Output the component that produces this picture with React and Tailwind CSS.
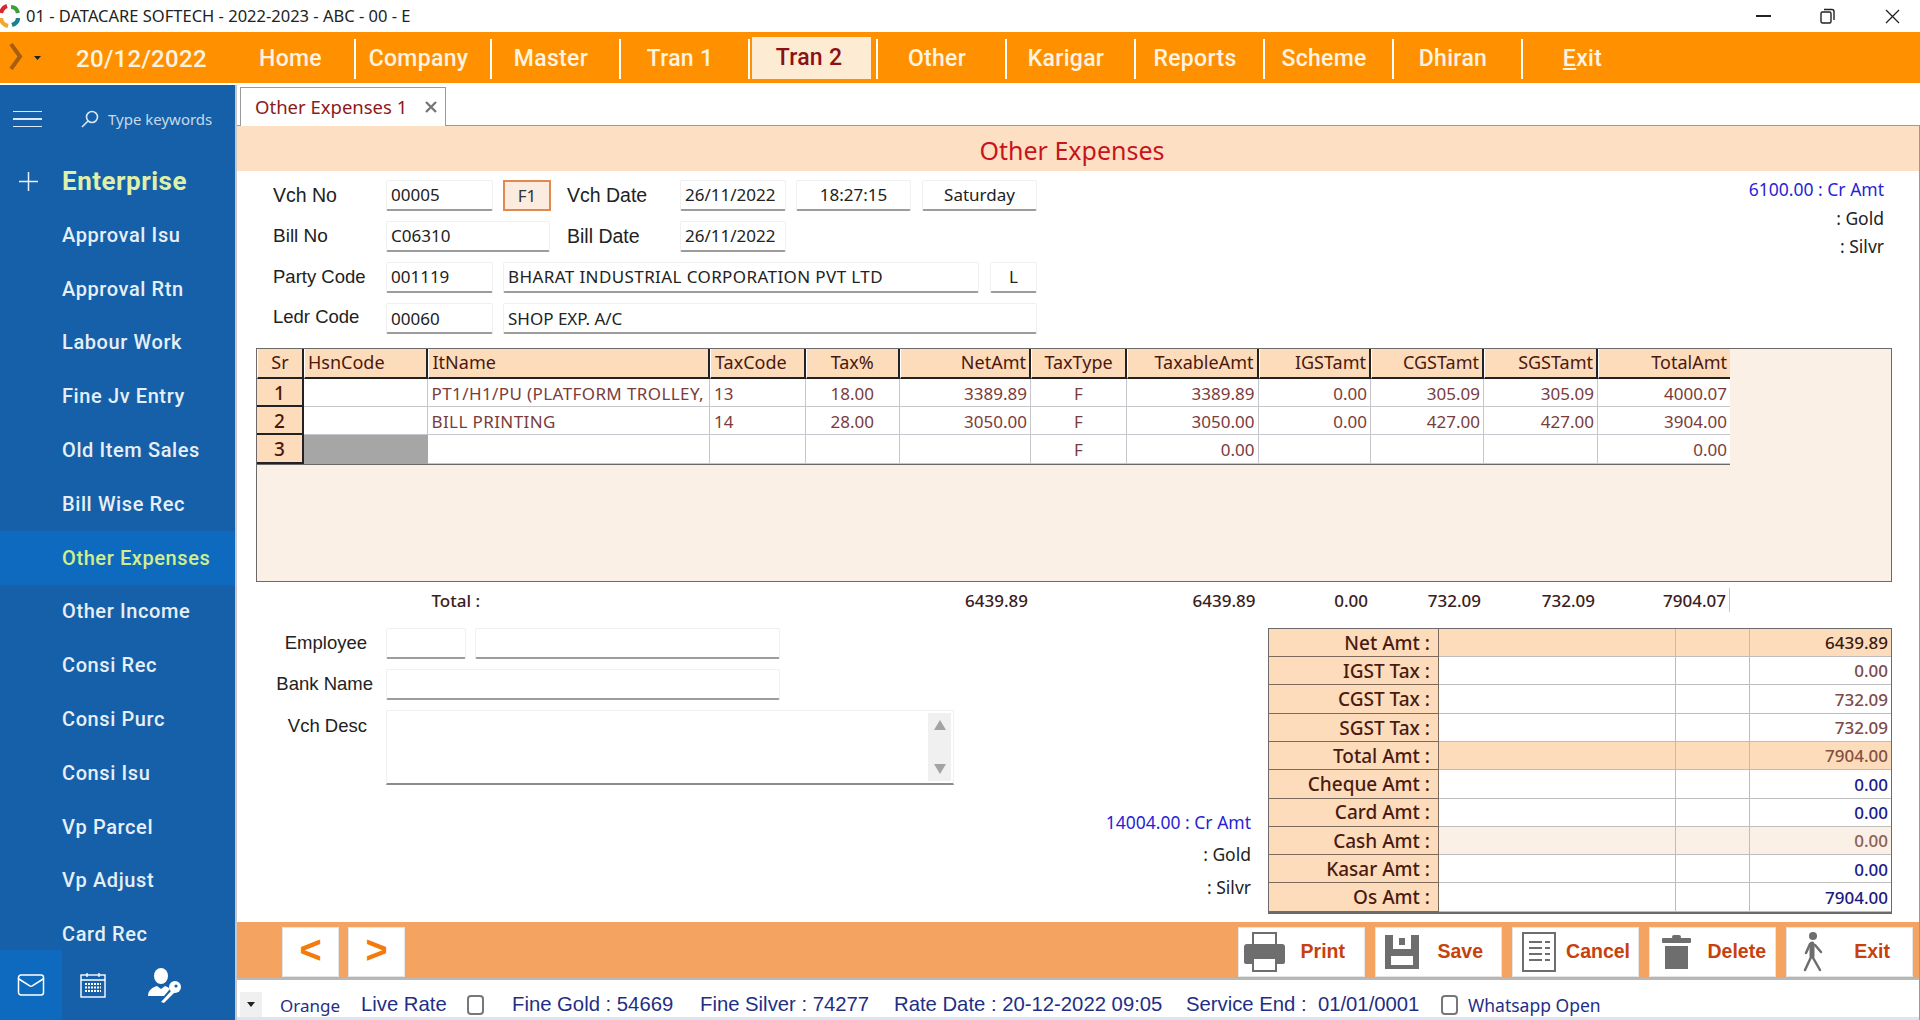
import { Mail } from "lucide-react";

const menuItems = ["Company", "Master", "Tran 1", "Tran 2", "Other", "Karigar", "Reports", "Scheme", "Dhiran"];

const sideItems = [
  "Approval Isu", "Approval Rtn", "Labour Work", "Fine Jv Entry", "Old Item Sales", "Bill Wise Rec", "Other Expenses",
  "Other Income", "Consi Rec", "Consi Purc", "Consi Isu", "Vp Parcel", "Vp Adjust", "Card Rec",
];

// grid columns, widths read off the picture
const cols = [
  "w-[47px] justify-center",
  "w-[123.5px] justify-start pl-[3px]",
  "w-[282.5px] justify-start pl-1",
  "w-[95.5px] justify-start pl-1",
  "w-[94.5px] justify-center",
  "w-[131px] justify-end pr-[3px]",
  "w-[96px] justify-center",
  "w-[131.5px] justify-end pr-[3px]",
  "w-[112.5px] justify-end pr-[3px]",
  "w-[113px] justify-end pr-[3px]",
  "w-[114px] justify-end pr-[3px]",
  "w-[132px] justify-end pr-[3px]",
];

const head = ["Sr", "HsnCode", "ItName", "TaxCode", "Tax%", "NetAmt", "TaxType", "TaxableAmt", "IGSTamt", "CGSTamt", "SGSTamt", "TotalAmt"];

const rows = [
  ["1", "", "PT1/H1/PU (PLATFORM TROLLEY,", "13", "18.00", "3389.89", "F", "3389.89", "0.00", "305.09", "305.09", "4000.07"],
  ["2", "", "BILL PRINTING", "14", "28.00", "3050.00", "F", "3050.00", "0.00", "427.00", "427.00", "3904.00"],
  ["3", "", "", "", "", "", "F", "0.00", "", "", "", "0.00"],
];

const totals = ["", "", "Total :", "", "", "6439.89", "", "6439.89", "0.00", "732.09", "732.09", "7904.07"];

const summary = [
  { label: "Net Amt :", value: "6439.89", bg: "bg-[#fddcbc]", color: "text-[#3a1a10]" },
  { label: "IGST Tax :", value: "0.00", bg: "bg-white", color: "text-[#7d4a4a]" },
  { label: "CGST Tax :", value: "732.09", bg: "bg-white", color: "text-[#7d4a4a]" },
  { label: "SGST Tax :", value: "732.09", bg: "bg-white", color: "text-[#7d4a4a]" },
  { label: "Total Amt :", value: "7904.00", bg: "bg-[#fddcbc]", color: "text-[#85503f]" },
  { label: "Cheque Amt :", value: "0.00", bg: "bg-white", color: "text-[#1a1a8c]" },
  { label: "Card Amt :", value: "0.00", bg: "bg-white", color: "text-[#1a1a8c]" },
  { label: "Cash Amt :", value: "0.00", bg: "bg-[#faf0e6]", color: "text-[#8a6055]" },
  { label: "Kasar Amt :", value: "0.00", bg: "bg-white", color: "text-[#1a1a8c]" },
  { label: "Os Amt :", value: "7904.00", bg: "bg-white", color: "text-[#1a1a80]" },
];

const noto = "font-['Noto_Sans',sans-serif]";
const din = "font-['Roboto',sans-serif]";
const arial = "font-['Liberation_Sans',sans-serif]";

function Field({ className, children }) {
  return (
    <div className={`h-[31px] flex items-center px-1 bg-white border border-[#f0f0f0] border-b-2 border-b-[#9c9c9c] rounded-[2px] text-[17px] text-[#222] whitespace-nowrap overflow-hidden ${noto} ${className}`}>
      {children}
    </div>
  );
}

function Logo() {
  return (
    <svg width="20" height="24" viewBox="0 0 20 24" fill="none" strokeWidth="4.2" className="shrink-0">
      <path d="M1 9 C2 5 4 3 7 2" stroke="#d9262c" />
      <path d="M11 3 C14 3 17 5 18 9" stroke="#3c9f3c" />
      <path d="M1 14 C1 18 4 21 8 22" stroke="#f2a72e" />
      <path d="M12 21 C15 20 18 18 18 14" stroke="#1c7f8f" />
    </svg>
  );
}

function PrintIcon() {
  return (
    <svg width="41" height="40" viewBox="0 0 41 40" className="shrink-0">
      <rect x="9" y="1" width="23" height="16" fill="#fff" stroke="#6e6e6e" strokeWidth="2" />
      <path d="M3 12 H38 Q41 12 41 15 V30 Q41 32 38 32 H33 V25 H8 V32 H3 Q0 32 0 30 V15 Q0 12 3 12 Z" fill="#6e6e6e" />
      <rect x="9" y="26" width="23" height="13" fill="#fff" stroke="#6e6e6e" strokeWidth="2" />
    </svg>
  );
}

function SaveIcon() {
  return (
    <svg width="34" height="34" viewBox="0 0 34 34" className="shrink-0">
      <path d="M0 0 H34 V34 H0 Z M8 0 V14 H26 V0 Z M6 21 V30 H28 V21 Z" fill="#6e6e6e" fillRule="evenodd" />
      <rect x="14" y="3" width="6" height="7" fill="#6e6e6e" />
    </svg>
  );
}

function CancelIcon() {
  return (
    <svg width="34" height="40" viewBox="0 0 34 40" className="shrink-0" fill="none" stroke="#6e6e6e">
      <rect x="1" y="1" width="32" height="38" strokeWidth="2" />
      <path d="M7 10 H20 M23 10 H28 M7 16 H20 M23 16 H28 M7 22 H20 M23 22 H28 M7 28 H20 M23 28 H28" strokeWidth="2" />
    </svg>
  );
}

function TrashIcon() {
  return (
    <svg width="29" height="34" viewBox="0 0 29 34" className="shrink-0" fill="#6e6e6e">
      <rect x="10" y="0" width="9" height="4" rx="2" />
      <rect x="0" y="3" width="29" height="5" rx="1" />
      <rect x="3" y="11" width="23" height="23" />
    </svg>
  );
}

function WalkIcon() {
  return (
    <svg width="24" height="40" viewBox="0 0 24 40" className="shrink-0" fill="none" stroke="#6e6e6e" strokeLinecap="round">
      <circle cx="12" cy="4" r="4" fill="#6e6e6e" stroke="none" />
      <path d="M11 12 L11 24" strokeWidth="5" />
      <path d="M11 23 L4 38 M11 24 L19 38" strokeWidth="2.5" />
      <path d="M9 12 L5 21 M14 13 L20 20" strokeWidth="2.5" />
    </svg>
  );
}

function CalendarIcon() {
  return (
    <svg width="26" height="26" viewBox="0 0 26 26" fill="none" stroke="#fff" strokeWidth="1.4" className="shrink-0">
      <rect x="1" y="3" width="24" height="22" />
      <path d="M1 8 H25 M7 1 V5 M19 1 V5" />
      <path d="M5 12 H21 M5 15.5 H21 M5 19 H21" strokeWidth="2" strokeDasharray="2 1" />
    </svg>
  );
}

function PersonKeyIcon() {
  return (
    <svg width="34" height="35" viewBox="0 0 34 35" className="shrink-0" fill="#fff">
      <ellipse cx="13" cy="8" rx="7" ry="8" />
      <path d="M0 28 C0 22 5 19 9 18 L13 21 L17 18 C20 19 21 20 22 21 L16 28 Z" />
      <circle cx="27" cy="19" r="6" />
      <path d="M24 22 L13 34 L16 35 L27 24 Z" />
      <circle cx="28" cy="18" r="1.6" fill="#1560a8" />
    </svg>
  );
}

function Sidebar() {
  return (
    <aside className={`w-[235px] shrink-0 bg-[#1560a8] flex flex-col ${din}`}>
      <div className="h-[69px] shrink-0 flex items-center pl-[13px] pb-[1px]">
        <div className="w-[29px] flex flex-col gap-[6px]">
          <div className="h-[1.5px] bg-[#dbe8f5]" />
          <div className="h-[1.5px] bg-[#dbe8f5]" />
          <div className="h-[1.5px] bg-[#dbe8f5]" />
        </div>
        <svg width="18" height="18" viewBox="0 0 18 18" fill="none" stroke="#dbe8f5" strokeWidth="1.6" className="ml-[39px]">
          <circle cx="11" cy="7" r="5.5" />
          <path d="M7 11 L1 17" />
        </svg>
        <span className={`ml-[9px] text-[15px] text-[#c9d9ea] whitespace-nowrap ${noto}`}>Type keywords</span>
      </div>
      <div className="h-[54px] shrink-0 flex items-center pl-[19px]">
        <svg width="19" height="19" viewBox="0 0 19 19" stroke="#e8f0f8" strokeWidth="1.5">
          <path d="M9.5 0 V19 M0 9.5 H19" />
        </svg>
        <span className="ml-[24px] text-[26px] font-bold text-[#dff0a8] tracking-[0.5px]">Enterprise</span>
      </div>
      <nav className="flex-1 min-h-0 overflow-hidden">
        {sideItems.map((item) => (
          <div
            key={item}
            className={`h-[53.8px] flex items-center pl-[62px] text-[20px] font-medium tracking-[0.6px] ${item === "Other Expenses" ? "bg-[#0e6abf] text-[#d2ee8c]" : "text-[#e6eff8]"}`}
          >
            {item}
          </div>
        ))}
      </nav>
      <div className="h-[70px] shrink-0 flex items-stretch">
        <div className="w-[62px] bg-[#0e6abf] flex items-center justify-center">
          <Mail size={30} strokeWidth={1.2} color="#fff" />
        </div>
        <div className="w-[59px] flex items-center justify-center pl-[2px]">
          <CalendarIcon />
        </div>
        <div className="flex items-center pl-[27px]">
          <PersonKeyIcon />
        </div>
      </div>
    </aside>
  );
}

function ItemsGrid() {
  return (
    <div className={`ml-[19px] mr-[27px] mt-[13px] h-[234px] shrink-0 border border-[#6a6a6a] bg-[#faf0e6] text-[17px] ${noto}`}>
      <div className="w-[1473px] border-r border-b border-[#6a6a6a]">
        <div className="flex h-[30px]">
          {head.map((h, i) => (
            <div
              key={h}
              className={`${cols[i]} ${i === 11 ? "pr-0" : ""} shrink-0 flex items-center overflow-hidden whitespace-nowrap bg-[#fddcbc] text-[#4a180c] text-[18px] border-b-2 border-[#222] border-l border-l-white ${i === 11 ? "" : "border-r-2"}`}
            >
              {h}
            </div>
          ))}
        </div>
        {rows.map((row) => (
          <div key={row[0]} className="flex h-[28.3px]">
            {row.map((cell, i) => (
              <div
                key={i}
                className={`${cols[i]} shrink-0 flex items-center pt-[2px] overflow-hidden whitespace-nowrap ${
                  i === 0
                    ? "bg-[#fddcbc] text-[#4a180c] text-[19px] font-medium border-r-2 border-b-2 border-[#222]"
                    : i === 1 && row[0] === "3"
                    ? "bg-[#a6a6a6]"
                    : `bg-white text-[#7a3b3b] border-b border-[#c6c6cc] ${i === 11 ? "" : "border-r"} ${i === 2 ? "tracking-[0.4px]" : ""}`
                }`}
              >
                {cell}
              </div>
            ))}
          </div>
        ))}
      </div>
    </div>
  );
}

function TotalRow() {
  return (
    <div className={`ml-[20px] h-[36px] shrink-0 flex items-center pt-[1px] text-[17px] font-medium text-[#3a2020] ${noto}`}>
      {totals.map((t, i) => (
        <div key={i} className={`${cols[i]} shrink-0 flex items-center whitespace-nowrap ${i === 11 ? "h-[24px] border-r border-[#c8c8c8]" : ""}`}>
          {t}
        </div>
      ))}
    </div>
  );
}

function SummaryTable() {
  return (
    <div className={`w-[624px] shrink-0 h-[286px] border border-[#6a6a6a] border-b-2 text-[17px] ${noto}`}>
      {summary.map((row) => (
        <div key={row.label} className="flex h-[28.3px]">
          <div className="w-[170px] flex items-center justify-end pr-2 pt-[1px] bg-[#fddcbc] text-[#4a1a10] text-[19px] font-medium border-r border-b border-[#7e6a5c]">
            {row.label}
          </div>
          <div className={`w-[237px] ${row.bg} border-r border-b border-[#bdbdbd]`} />
          <div className={`w-[74px] ${row.bg} border-r border-b border-[#bdbdbd]`} />
          <div className={`flex-1 flex items-center justify-end pr-[3px] pt-[1px] font-medium border-b border-[#bdbdbd] ${row.bg} ${row.color}`}>
            {row.value}
          </div>
        </div>
      ))}
    </div>
  );
}

function LowerForm() {
  return (
    <div className="w-[717px] shrink-0 flex flex-col gap-[10px]">
      <div className="flex items-center">
        <div className={`w-[130px] text-right text-[18.5px] text-[#222] ${arial}`}>Employee</div>
        <Field className="ml-[19px] w-[80px]" />
        <Field className="ml-[9px] w-[305px]" />
      </div>
      <div className="flex items-center">
        <div className={`w-[136px] text-right text-[18.5px] text-[#222] whitespace-nowrap ${arial}`}>Bank Name</div>
        <Field className="ml-[13px] w-[394px]" />
      </div>
      <div className="flex items-start">
        <div className={`w-[130px] pt-[2px] text-right text-[18.5px] text-[#222] ${arial}`}>Vch Desc</div>
        <div className="ml-[19px] w-[568px] h-[75px] bg-white border border-[#f0f0f0] border-b-2 border-b-[#8c8c8c] flex justify-end p-[2px]">
          <div className="w-[23px] bg-[#f0f0f0] flex flex-col items-center justify-between py-[7px]">
            <svg width="12" height="10" viewBox="0 0 12 10" fill="#a3a3a3"><path d="M6 0 L12 10 H0 Z" /></svg>
            <svg width="12" height="10" viewBox="0 0 12 10" fill="#a3a3a3"><path d="M0 0 H12 L6 10 Z" /></svg>
          </div>
        </div>
      </div>
    </div>
  );
}

function ActionButton({ icon, label, className }) {
  return (
    <button className={`w-[127px] h-[50px] bg-white border border-[#e6e6e6] flex items-center justify-between ${className}`}>
      {icon}
      <span className={`text-[19.5px] font-bold text-[#c8410c] whitespace-nowrap ${arial}`}>{label}</span>
    </button>
  );
}

function Checkbox({ className }) {
  return <div className={`w-[17px] h-[20px] rounded-[4px] border-2 border-[#777] bg-white shrink-0 ${className}`} />;
}

function StatusBar() {
  return (
    <div className={`h-[40px] shrink-0 flex items-end bg-white border-b-[3px] border-[#dbe6f2] text-[#1f2f85] whitespace-nowrap ${arial}`}>
      <div className="w-[22px] h-[25px] bg-[#f0f0f0] ml-[3px] flex items-center justify-center">
        <svg width="8" height="5" viewBox="0 0 8 5"><path d="M0 0 H8 L4 5 Z" fill="#222" /></svg>
      </div>
      <div className="flex items-center h-[37px] pt-[12px]">
        <span className={`ml-[18px] w-[57px] pt-[3px] text-[17px] ${noto}`}>Orange</span>
        <span className="ml-[24px] w-[86px] text-[20.3px]">Live Rate</span>
        <Checkbox className="ml-[20px]" />
        <span className="ml-[28px] w-[161px] text-[20.3px]">Fine Gold : 54669</span>
        <span className="ml-[27px] w-[170px] text-[20.3px]">Fine Silver : 74277</span>
        <span className="ml-[24px] w-[272px] text-[20.3px]">Rate Date : 20-12-2022 09:05</span>
        <span className="ml-[20px] w-[234px] text-[20.3px]">Service End :&nbsp; 01/01/0001</span>
        <Checkbox className="ml-[21px]" />
        <span className={`ml-[10px] pt-[2px] text-[17.5px] ${noto}`}>Whatsapp Open</span>
      </div>
    </div>
  );
}

export default function App() {
  return (
    <div className="w-[1920px] h-[1020px] bg-white flex flex-col overflow-hidden">
      {/* title bar */}
      <div className="h-[32px] shrink-0 flex items-center">
        <Logo />
        <span className={`ml-[6px] text-[16.5px] text-[#222] whitespace-nowrap ${noto}`}>01 - DATACARE SOFTECH - 2022-2023 - ABC - 00 - E</span>
        <div className="ml-auto flex items-center pr-[20px]">
          <div className="w-[15px] h-[2px] bg-[#222]" />
          <svg width="15" height="16" viewBox="0 0 15 16" fill="none" stroke="#222" strokeWidth="1.4" className="ml-[49px]">
            <rect x="1" y="4" width="10" height="11" rx="1.5" />
            <path d="M4 1.5 H12 Q14 1.5 14 3.5 V12" />
          </svg>
          <svg width="15" height="15" viewBox="0 0 15 15" stroke="#222" strokeWidth="1.3" className="ml-[50px]">
            <path d="M1 1 L14 14 M14 1 L1 14" />
          </svg>
        </div>
      </div>

      {/* menu bar */}
      <div className={`h-[51px] shrink-0 bg-[#ff9000] flex items-start pt-[7px] text-[23px] font-medium tracking-[0.3px] text-[#fff3e2] ${din}`}>
        <svg width="14" height="27" viewBox="0 0 14 27" fill="none" stroke="#a85e10" strokeWidth="4" className="ml-[9px] mt-[4px] shrink-0">
          <path d="M2 1 L11 13.5 L2 26" />
        </svg>
        <svg width="7" height="4" viewBox="0 0 7 4" className="ml-[11px] mt-[17px] shrink-0"><path d="M0 0 H7 L3.5 4 Z" fill="#222" /></svg>
        <span className="ml-[35px] w-[148px] h-[40px] flex items-center text-[24px] whitespace-nowrap">20/12/2022</span>
        <div className="ml-[3px] w-[129px] h-[40px] border-r-2 border-[#fff] flex items-center justify-center">Home</div>
        {menuItems.map((m) =>
          m === "Tran 2" ? (
            <div key={m} className="w-[128px] h-[40px] border-r-2 border-[#fff] flex">
              <div className="ml-[2px] mr-[5px] -mt-[2px] h-[42px] flex-1 bg-[#fdebd3] text-[#8b1014] flex items-center justify-center pr-[5px]">{m}</div>
            </div>
          ) : (
            <div key={m} className={`${m === "Company" ? "w-[136px]" : "w-[129px]"} h-[40px] border-r-2 border-[#fff] flex items-center justify-center pr-[9px]`}>{m}</div>
          )
        )}
        <div className="w-[128px] h-[40px] flex items-center justify-center pr-[9px]"><span className="underline underline-offset-2">E</span>xit</div>
      </div>

      <div className="h-[2px] shrink-0" />

      <div className="flex-1 min-h-0 flex">
        <Sidebar />
        <main className="flex-1 min-w-0 flex flex-col border-l-2 border-[#c8c8c8]">
          {/* tab strip */}
          <div className="h-[41px] shrink-0 flex items-end pl-[3px] border-b border-[#9a9a9a]">
            <div className="w-[206px] h-[39px] -mb-px bg-white border border-[#9a9a9a] border-b-0 flex items-center pl-[14px]">
              <span className={`text-[18.5px] text-[#8b1a1a] whitespace-nowrap ${noto}`}>Other Expenses 1</span>
              <svg width="12" height="12" viewBox="0 0 12 12" stroke="#777" strokeWidth="2.4" className="ml-[18px]">
                <path d="M1 1 L11 11 M11 1 L1 11" />
              </svg>
            </div>
          </div>

          {/* panel */}
          <div className="flex-1 min-h-0 flex flex-col border-r border-[#9a9a9a]">
            <div className={`h-[45px] shrink-0 bg-[#fde0c4] flex items-center justify-center pt-[4px] pr-[12px] text-[25px] text-[#c8141c] ${noto}`}>
              Other Expenses
            </div>

            <div className="flex justify-between shrink-0">
              <div className="pt-[9px] flex flex-col gap-[10px]">
                <div className="flex items-center">
                  <div className={`ml-[36px] w-[113px] text-[19.5px] text-[#222] ${arial}`}>Vch No</div>
                  <Field className="w-[107px]">00005</Field>
                  <div className={`ml-[10px] w-[48px] h-[31px] flex items-center justify-center bg-[#fcecdf] border-2 border-[#e08a50] text-[17px] text-[#333] ${noto}`}>F1</div>
                  <div className={`ml-[16px] w-[113px] text-[19.5px] text-[#222] ${arial}`}>Vch Date</div>
                  <Field className="w-[106px]">26/11/2022</Field>
                  <Field className="ml-[10px] w-[115px] justify-center">18:27:15</Field>
                  <Field className="ml-[11px] w-[115px] justify-center">Saturday</Field>
                </div>
                <div className="flex items-center">
                  <div className={`ml-[36px] w-[113px] text-[19px] text-[#222] ${arial}`}>Bill No</div>
                  <Field className="w-[164px]">C06310</Field>
                  <div className={`ml-[17px] w-[113px] text-[19.5px] text-[#222] ${arial}`}>Bill Date</div>
                  <Field className="w-[106px]">26/11/2022</Field>
                </div>
                <div className="flex items-center">
                  <div className={`ml-[36px] w-[113px] pb-[2px] text-[18.5px] text-[#222] ${arial}`}>Party Code</div>
                  <Field className="w-[107px]">001119</Field>
                  <Field className="ml-[10px] w-[476px] tracking-[0.4px]">BHARAT INDUSTRIAL CORPORATION PVT LTD</Field>
                  <Field className="ml-[11px] w-[47px] justify-center">L</Field>
                </div>
                <div className="flex items-center">
                  <div className={`ml-[36px] w-[113px] pb-[4px] text-[18.5px] text-[#222] ${arial}`}>Ledr Code</div>
                  <Field className="w-[107px]">00060</Field>
                  <Field className="ml-[10px] w-[534px]">SHOP EXP. A/C</Field>
                </div>
              </div>
              <div className={`pt-[4px] pr-[35px] text-right text-[17.5px] text-[#222] ${noto}`}>
                <div className="h-[28.5px] flex items-center justify-end text-[#2a1fd6]">6100.00 : Cr Amt</div>
                <div className="h-[28.5px] flex items-center justify-end">: Gold</div>
                <div className="h-[28.5px] flex items-center justify-end">: Silvr</div>
              </div>
            </div>

            <ItemsGrid />
            <TotalRow />

            <div className="mt-[10px] pr-[27px] flex shrink-0">
              <LowerForm />
              <div className={`flex-1 pt-[178px] pr-[17px] text-right text-[17.5px] text-[#222] ${noto}`}>
                <div className="h-[32.5px] flex items-center justify-end text-[#2a1fd6] whitespace-nowrap">14004.00 : Cr Amt</div>
                <div className="h-[32.5px] flex items-center justify-end">: Gold</div>
                <div className="h-[32.5px] flex items-center justify-end">: Silvr</div>
              </div>
              <SummaryTable />
            </div>

            {/* action bar */}
            <div className="mt-auto h-[58px] shrink-0 bg-[#f4a460] border-b-2 border-[#b9b9b9] flex items-start pt-[5px] pl-[45px] pr-[6px]">
              <button className={`w-[57px] h-[50px] bg-white border border-[#e6e6e6] text-[38px] font-bold leading-none text-[#f47a0a] pb-1 ${arial}`}>&lt;</button>
              <button className={`ml-[9px] w-[57px] h-[50px] bg-white border border-[#e6e6e6] text-[38px] font-bold leading-none text-[#f47a0a] pb-1 ${arial}`}>&gt;</button>
              <div className="ml-auto flex gap-[10px]">
                <ActionButton icon={<PrintIcon />} label="Print" className="pl-[5px] pr-[19px]" />
                <ActionButton icon={<SaveIcon />} label="Save" className="pl-[9px] pr-[18px]" />
                <ActionButton icon={<CancelIcon />} label="Cancel" className="pl-[9px] pr-[8px]" />
                <ActionButton icon={<TrashIcon />} label="Delete" className="pl-[12px] pr-[9px]" />
                <ActionButton icon={<WalkIcon />} label="Exit" className="pl-[14px] pr-[22px]" />
              </div>
            </div>

            <StatusBar />
          </div>
        </main>
      </div>
    </div>
  );
}
